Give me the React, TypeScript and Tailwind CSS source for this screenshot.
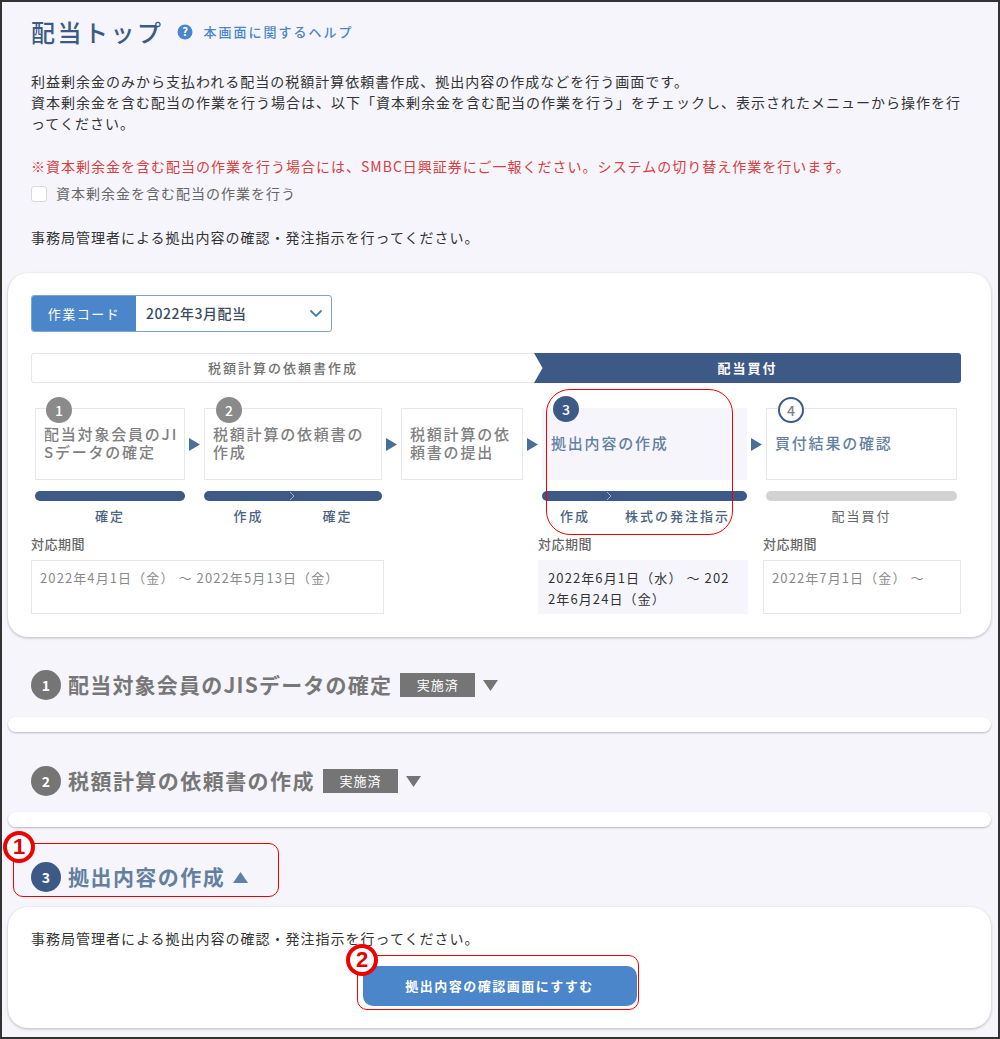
import * as React from "react";

const FONT = "font-['Noto_Sans_CJK_JP','Noto_Sans',sans-serif]";

type Step = {
  no: string;
  title: React.ReactNode;
  width: string;
  circle: string;
  circleMargin: string;
  box: string;
  bar: React.ReactNode;
  labels: React.ReactNode;
};

function Bar({ split, grey }: { split?: number; grey?: boolean }) {
  return (
    <div className={`relative h-[10px] rounded-full ${grey ? "bg-[#d2d2d2]" : "bg-[#3d5a87]"}`}>
      {split !== undefined && (
        <svg
          className="absolute top-0 h-[10px] w-[6px]"
          style={{ left: split }}
          viewBox="0 0 6 10"
          fill="none"
        >
          <path d="M1 1l4 4-4 4" stroke="#9fb3cf" strokeWidth="1" />
        </svg>
      )}
    </div>
  );
}

function Arrow() {
  return (
    <div className="flex h-[72px] w-[19px] shrink-0 items-center justify-center">
      <svg width="11" height="13" viewBox="0 0 11 13">
        <path d="M0 0l11 6.5L0 13z" fill="#4a7099" />
      </svg>
    </div>
  );
}

const steps: Step[] = [
  {
    no: "1",
    title: "配当対象会員のJISデータの確定",
    width: "w-[150px]",
    circle: "bg-[#8a8a8a] text-white",
    circleMargin: "ml-[10px]",
    box: "border border-[#e6e6ee] text-[#808080] pl-2 pr-1",
    bar: <Bar />,
    labels: <div className="text-center">確定</div>,
  },
  {
    no: "2",
    title: "税額計算の依頼書の作成",
    width: "w-[178px]",
    circle: "bg-[#8a8a8a] text-white",
    circleMargin: "ml-[11px]",
    box: "border border-[#e6e6ee] text-[#808080] pl-2 pr-1",
    bar: <Bar split={85} />,
    labels: (
      <div className="flex">
        <div className="w-[89px] text-center">作成</div>
        <div className="w-[89px] text-center">確定</div>
      </div>
    ),
  },
  {
    no: "",
    title: "税額計算の依頼書の提出",
    width: "w-[122px]",
    circle: "",
    circleMargin: "",
    box: "border border-[#e6e6ee] text-[#808080] pl-2 pr-1",
    bar: null,
    labels: null,
  },
  {
    no: "3",
    title: "拠出内容の作成",
    width: "w-[205px]",
    circle: "bg-[#3d5a87] text-white",
    circleMargin: "ml-[11px]",
    box: "bg-[#f5f5fb] text-[#64809f] pl-[9px] pr-1",
    bar: <Bar split={64} />,
    labels: (
      <div className="flex">
        <div className="ml-[18px] w-[30px] whitespace-nowrap">作成</div>
        <div className="ml-[35px] whitespace-nowrap">株式の発注指示</div>
      </div>
    ),
  },
  {
    no: "4",
    title: "買付結果の確認",
    width: "w-[191px]",
    circle: "border-2 border-[#3d5a87] bg-white text-[#808080]",
    circleMargin: "ml-[11px]",
    box: "border border-[#e6e6ee] text-[#64809f] pl-2 pr-1",
    bar: <Bar grey />,
    labels: <div className="text-center font-normal text-[#666]">配当買付</div>,
  },
];

function StepColumn({ step }: { step: Step }) {
  return (
    <div className={`shrink-0 ${step.width}`}>
      <div
        className={`relative flex h-[72px] items-center pb-[2px] text-[15px] font-medium leading-[18px] tracking-[1.8px] ${step.box}`}
      >
        <span className="break-all">{step.title}</span>
        {step.no && (
          <div
            className={`absolute top-[-12px] flex h-[26px] w-[26px] items-center justify-center rounded-full text-[14px] leading-none tracking-normal ${step.circle} ${step.circleMargin} left-0`}
          >
            {step.no}
          </div>
        )}
      </div>
      {step.bar && <div className="mt-[11px]">{step.bar}</div>}
      {step.labels && (
        <div className="mt-[5px] text-[13px] font-medium leading-[20px] tracking-[2px] text-[#4a6480]">
          {step.labels}
        </div>
      )}
    </div>
  );
}

function Period({
  width,
  children,
  active,
}: {
  width: string;
  children: React.ReactNode;
  active?: boolean;
}) {
  return (
    <div className={`shrink-0 ${width}`}>
      <div className="text-[13px] font-medium leading-[20px] tracking-[0.5px] text-[#666]">対応期間</div>
      <div
        className={`mt-[6px] h-[54px] text-[13px] leading-[21px] tracking-[1.1px] break-all ${
          active
            ? "bg-[#f5f5fb] pl-[10px] pr-[12px] pt-[7px] text-[#333]"
            : "border border-[#e6e6ee] px-2 pt-[6px] text-[#8a8a8a]"
        }`}
      >
        {children}
      </div>
    </div>
  );
}

function SectionHead({
  no,
  title,
  done,
  open,
  tight,
}: {
  no: string;
  title: string;
  done?: boolean;
  open?: boolean;
  tight?: boolean;
}) {
  return (
    <div className="flex h-[30px] items-center pl-[29px]">
      <div
        className={`flex h-[30px] w-[30px] shrink-0 items-center justify-center rounded-full text-[14px] font-bold text-white ${
          open ? "bg-[#3d5a87]" : "bg-[#757575]"
        }`}
      >
        {no}
      </div>
      <div
        className={`ml-[7px] whitespace-nowrap text-[21px] font-bold ${tight ? "tracking-[1.2px]" : "tracking-[1.45px]"} ${
          open ? "text-[#64809f]" : "text-[#777]"
        }`}
      >
        {title}
      </div>
      {done && (
        <div className="ml-[8px] flex h-[24px] w-[75px] items-center justify-center bg-[#757575] text-[13px] tracking-[1px] text-white">
          実施済
        </div>
      )}
      <svg className="ml-[8px]" width="15" height="11" viewBox="0 0 15 11">
        {open ? <path d="M7.5 0L15 11H0z" fill="#5f7fa6" /> : <path d="M0 0h15L7.5 11z" fill="#757575" />}
      </svg>
    </div>
  );
}

function EmptyCard() {
  return <div className="ml-[6px] mr-[7px] h-[15px] rounded-[8px] bg-white shadow-[0_1px_2px_rgba(0,0,0,0.25)]" />;
}

function Marker({ no, className }: { no: string; className: string }) {
  return (
    <div
      className={`absolute flex h-[32px] w-[32px] items-center justify-center rounded-full border-[4px] border-[#f00000] bg-white font-['Liberation_Sans',sans-serif] text-[22px] font-bold leading-none text-[#e00000] ${className}`}
    >
      {no}
    </div>
  );
}

export default function App() {
  return (
    <div className={`relative h-[1039px] w-[1000px] overflow-hidden border-2 border-[#333] bg-[#f5f5fb] ${FONT}`}>
      {/* page head */}
      <div className="flex h-[59px] items-center pl-[29px]">
        <h1 className="text-[24px] font-medium tracking-[2.5px] text-[#3d5a87]">配当トップ</h1>
        <svg className="ml-[13px]" width="16" height="16" viewBox="0 0 16 16">
          <circle cx="8" cy="8" r="7.5" fill="#4a86c9" />
          <text x="8" y="12" textAnchor="middle" fontSize="11" fontWeight="700" fill="#fff">
            ?
          </text>
        </svg>
        <a className="ml-[11px] text-[13px] font-medium tracking-[2px] text-[#4a86c9]">本画面に関するヘルプ</a>
      </div>

      <div className="px-[29px] pt-[10px] text-[14px] leading-[21px] tracking-[1px] text-[#333]">
        <p>
          利益剰余金のみから支払われる配当の税額計算依頼書作成、拠出内容の作成などを行う画面です。
          <br />
          資本剰余金を含む配当の作業を行う場合は、以下「資本剰余金を含む配当の作業を行う」をチェックし、表示されたメニューから操作を行ってください。
        </p>
        <p className="mt-[22px] text-[#d6403f]">
          ※資本剰余金を含む配当の作業を行う場合には、SMBC日興証券にご一報ください。システムの切り替え作業を行います。
        </p>
        <label className="mt-[6px] flex items-center text-[#666]">
          <span className="h-[16px] w-[16px] rounded-[3px] border border-[#d8d8e0] bg-white" />
          <span className="ml-[9px]">資本剰余金を含む配当の作業を行う</span>
        </label>
        <p className="mt-[23px]">事務局管理者による拠出内容の確認・発注指示を行ってください。</p>
      </div>

      {/* main card */}
      <div className="ml-[6px] mr-[7px] mt-[25px] h-[364px] rounded-[20px] bg-white px-[23px] pt-[22px] shadow-[0_1px_3px_rgba(0,0,0,0.25)]">
        <div className="flex h-[37px] w-[301px] overflow-hidden rounded-[3px] border border-[#7fa3c9]">
          <div className="flex w-[104px] items-center justify-center bg-[#4a86c9] text-[13px] tracking-[1.5px] text-white">
            作業コード
          </div>
          <div className="flex flex-1 items-center justify-between pl-[10px] pr-[8px] text-[14px] font-medium tracking-[0.5px] text-[#3a4a60]">
            2022年3月配当
            <svg width="14" height="9" viewBox="0 0 14 9" fill="none">
              <path d="M1.5 1.5L7 7l5.5-5.5" stroke="#4a7fb0" strokeWidth="1.8" />
            </svg>
          </div>
        </div>

        {/* phase bar */}
        <div className="mt-[21px] flex h-[30px] w-[930px] text-[13px] font-medium tracking-[2px]">
          <div className="flex w-[503px] items-center justify-center rounded-l-[3px] border border-r-0 border-[#e6e6ee] text-[#707070]">
            税額計算の依頼書作成
          </div>
          <div className="flex w-[427px] items-center justify-center rounded-r-[3px] bg-[#3d5a87] font-bold text-white [clip-path:polygon(0_0,100%_0,100%_100%,0_100%,2%_50%)]">
            配当買付
          </div>
        </div>

        {/* steps */}
        <div className="mt-[25px] flex h-[125px] pl-[4px]">
          <StepColumn step={steps[0]} />
          <Arrow />
          <StepColumn step={steps[1]} />
          <Arrow />
          <StepColumn step={steps[2]} />
          <Arrow />
          <StepColumn step={steps[3]} />
          <Arrow />
          <StepColumn step={steps[4]} />
        </div>

        {/* periods */}
        <div className="mt-[1px] flex">
          <Period width="w-[353px]">2022年4月1日（金） ～ 2022年5月13日（金）</Period>
          <div className="ml-[154px]">
            <Period width="w-[210px]" active>
              2022年6月1日（水） ～ 2022年6月24日（金）
            </Period>
          </div>
          <div className="ml-[15px]">
            <Period width="w-[198px]">2022年7月1日（金） ～</Period>
          </div>
        </div>
      </div>

      {/* sections */}
      <div className="mt-[33px]">
        <SectionHead no="1" title="配当対象会員のJISデータの確定" done tight />
      </div>
      <div className="mt-[17px]">
        <EmptyCard />
      </div>
      <div className="mt-[34px]">
        <SectionHead no="2" title="税額計算の依頼書の作成" done />
      </div>
      <div className="mt-[16px]">
        <EmptyCard />
      </div>
      <div className="mt-[35px]">
        <SectionHead no="3" title="拠出内容の作成" open />
      </div>
      <div className="ml-[6px] mr-[7px] mt-[15px] h-[121px] rounded-[20px] bg-white px-[23px] pt-[21px] shadow-[0_1px_3px_rgba(0,0,0,0.25)]">
        <p className="text-[14px] leading-[21px] tracking-[1px] text-[#333]">
          事務局管理者による拠出内容の確認・発注指示を行ってください。
        </p>
        <div className="mt-[17px] flex justify-center">
          <button className="h-[40px] w-[274px] rounded-[10px] bg-[#4a86c9] text-[13px] font-bold tracking-[1.5px] text-white">
            拠出内容の確認画面にすすむ
          </button>
        </div>
      </div>

      {/* red annotations */}
      <div className="absolute left-[544px] top-[387px] h-[146px] w-[187px] rounded-[24px] border-[1.5px] border-[#f00000]" />
      <div className="absolute left-[11px] top-[841px] h-[54px] w-[266px] rounded-[10px] border-[1.5px] border-[#f00000]" />
      <div className="absolute left-[355px] top-[953px] h-[55px] w-[282px] rounded-[10px] border-[1.5px] border-[#f00000]" />
      <Marker no="1" className="left-[1px] top-[829px]" />
      <Marker no="2" className="left-[344px] top-[942px]" />
    </div>
  );
}
